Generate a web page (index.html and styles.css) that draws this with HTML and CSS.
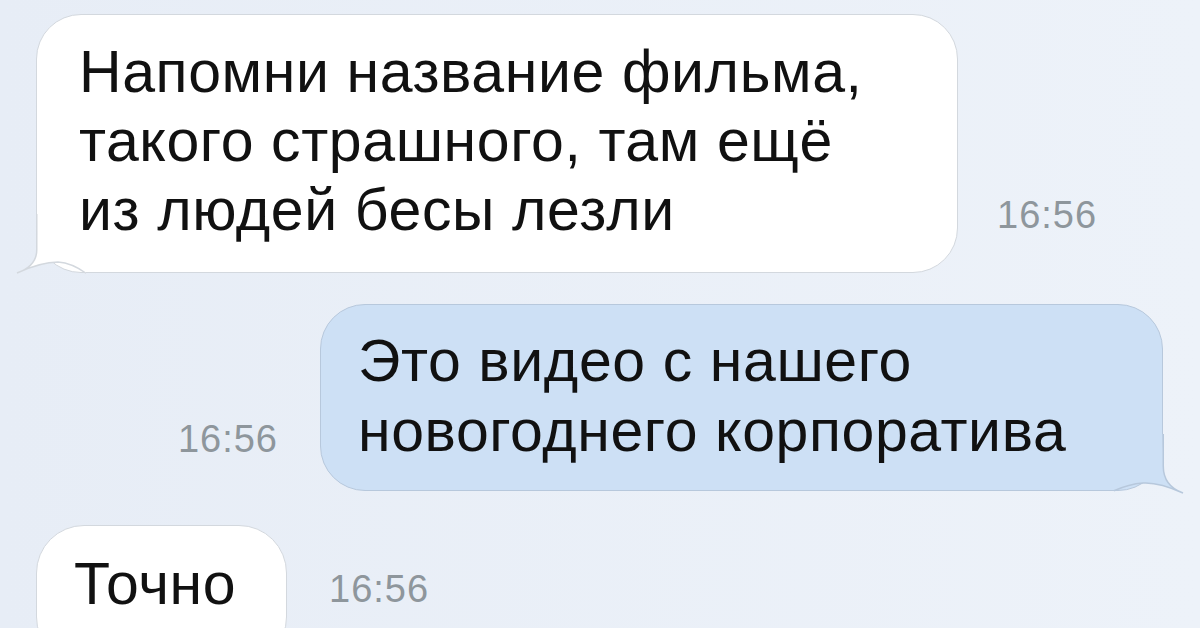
FILE: index.html
```
<!DOCTYPE html>
<html lang="ru">

<head>
	<meta charset="UTF-8">
	<meta name="viewport" content="width=device-width, initial-scale=1.0">
	<title>Сообщения</title>
	<link rel="stylesheet" href="styles.css">
</head>

<body>
	<div class="chat">
		<div class="row row-in">
			<div class="bubble bubble-in">
				<p>Напомни название фильма,<br>такого страшного, там ещё<br>из людей бесы лезли</p>
				<svg class="tail tail-in" width="80" height="60" viewBox="0 0 80 60">
					<path class="tail-fill" d="M21.5 0 L20.75 36 Q20.75 52 1 59 Q25 48 42 48 Q56 49 70 59.25 L70 0 Z" />
					<path class="tail-line" d="M20.75 0 L20.75 36 Q20.75 52 1 59 Q25 48 42 48 Q56 49 70 59.25" />
				</svg>
			</div>
			<span class="time">16:56</span>
		</div>

		<div class="row row-out">
			<span class="time">16:56</span>
			<div class="bubble bubble-out">
				<p>Это видео с нашего<br>новогоднего корпоратива</p>
				<svg class="tail tail-out" width="80" height="60" viewBox="0 0 80 60">
					<path class="tail-fill" d="M58.5 0 L59.25 32 Q59.25 52 79 59 Q55 48 39 49 Q25 50 10 56.75 L10 0 Z" />
					<path class="tail-line" d="M59.25 0 L59.25 32 Q59.25 52 79 59 Q55 48 39 49 Q25 50 10 56.75" />
				</svg>
			</div>
		</div>

		<div class="row row-in last">
			<div class="bubble bubble-in short">
				<p>Точно</p>
			</div>
			<span class="time">16:56</span>
		</div>
	</div>
</body>

</html>
```

FILE: styles.css
```
* {
	margin: 0;
	padding: 0;
	box-sizing: border-box;
}

html,
body {
	height: 100%;
	overflow: hidden;
}

body {
	background: linear-gradient(90deg, #e7edf6, #edf2f9);
	font-family: 'Liberation Sans', Arial, sans-serif;
	color: #111;
}

.chat {
	display: flex;
	flex-direction: column;
	gap: 31px;
	padding: 14px 0 0;
}

.row {
	display: flex;
	align-items: flex-end;
}

.row-in {
	padding-left: 36px;
}

.row-out {
	justify-content: flex-end;
	padding-right: 37px;
}

.bubble {
	position: relative;
	font-size: 59px;
	letter-spacing: 0.6px;
	line-height: 69px;
	border-radius: 45px;
}

.bubble p {
	position: relative;
	z-index: 1;
	white-space: nowrap;
}

.bubble-in {
	background: #fff;
	border: 1.5px solid #d3d8de;
	width: 922px;
	padding: 22.5px 0 27.5px 42px;
}

.bubble-out {
	background: #cde0f5;
	border: 1.5px solid #b7c8dc;
	width: 843px;
	padding: 21px 0 24px 37px;
	line-height: 70px;
}

.short {
	width: 251px;
	height: 140px;
	padding: 23.5px 0 0 37px;
	margin-top: 3px;
	border-radius: 48px;
}

.time {
	font-size: 38px;
	letter-spacing: 1px;
	color: #8e969c;
	line-height: 1;
}

.row-in .time {
	margin: 0 0 39px 39px;
}

.row-out .time {
	margin: 0 42px 33px 0;
}

.last .time {
	align-self: flex-start;
	margin: 48px 0 0 42px;
}

.tail {
	position: absolute;
	bottom: -1.5px;
}

.tail-in {
	left: -21.5px;
}

.tail-out {
	right: -21.5px;
	bottom: -3.5px;
}

.tail-fill {
	stroke: none;
}

.tail-line {
	fill: none;
	stroke-width: 1.5;
}

.bubble-in .tail-fill {
	fill: #fff;
}

.bubble-in .tail-line {
	stroke: #d3d8de;
}

.bubble-out .tail-fill {
	fill: #cde0f5;
}

.bubble-out .tail-line {
	stroke: #b7c8dc;
}
```
